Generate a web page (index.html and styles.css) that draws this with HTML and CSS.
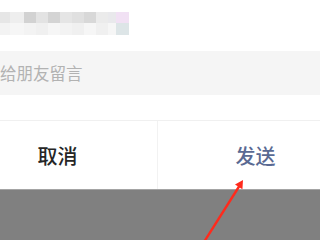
FILE: index.html
```html
<!DOCTYPE html>
<html lang="zh">
<head>
<meta charset="utf-8">
<link rel="stylesheet" href="styles.css">
</head>
<body>
<div class="screen">
  <div class="dialog">
    <div class="mosaic">
      <i class="c1"></i><i class="c2"></i><i class="c3"></i><i class="c4"></i><i class="c5"></i><i class="c6"></i><i class="c7"></i><i class="c8"></i><i class="c9"></i><i class="c10"></i><i class="c11"></i>
      <i class="d1"></i><i class="d2"></i><i class="d1"></i><i class="d3"></i><i class="d2"></i><i class="d1"></i><i class="d3"></i><i class="d2"></i><i class="d3"></i><i class="d2"></i><i class="d4"></i>
    </div>
    <div class="input">给朋友留言</div>
    <div class="actions">
      <div class="btn cancel">取消</div>
      <div class="sep"></div>
      <div class="btn send">发送</div>
    </div>
  </div>
  <div class="overlay"></div>
  <svg class="arrow" width="320" height="240" viewBox="0 0 320 240">
    <line x1="204" y1="242" x2="240" y2="185" stroke="#ff2a1c" stroke-width="2.4" stroke-linecap="round"/>
    <polygon points="243,180 242.4,189.2 235,184.6" fill="#ff2a1c"/>
  </svg>
</div>
</body>
</html>
```
FILE: styles.css
```css
html, body {
  margin: 0;
  padding: 0;
  background: #ffffff;
}
.screen {
  position: relative;
  width: 320px;
  height: 240px;
  overflow: hidden;
  font-family: "Noto Sans CJK SC", "Noto Sans", sans-serif;
}
.dialog {
  margin-left: -42px;
  width: 399px;
  height: 189px;
  background: #ffffff;
  display: flex;
  flex-direction: column;
}
.mosaic {
  margin-top: 12px;
  margin-left: 42px;
  display: grid;
  grid-template-columns: 10px 14px 12px 12px 12px 12px 12px 12px 12px 8px 13px;
  grid-template-rows: 11px 12px;
  width: 129px;
}
.mosaic i { display: block; }
.c1 { background: #e6e6e6; }
.c2 { background: #eeeeee; }
.c3 { background: #d2d2d2; }
.c4 { background: #e3e3e3; }
.c5 { background: #d4d4d4; }
.c6 { background: #e5e5e5; }
.c7 { background: #e0e0e0; }
.c8 { background: #d8d8d8; }
.c9 { background: #ebebeb; }
.c10 { background: #e9e9ec; }
.c11 { background: #f1e1f4; }
.d1 { background: #f3f3f3; }
.d2 { background: #f6f6f6; }
.d3 { background: #f0f0f0; }
.d4 { background: #dde5e7; }
.input {
  margin-top: 16px;
  height: 44px;
  background: #f5f5f5;
  box-sizing: border-box;
  padding-left: 42px;
  font-size: 16.5px;
  line-height: 44px;
  color: #b2b2b2;
}
.actions {
  margin-top: 25px;
  border-top: 1px solid #f0f0f0;
  flex: 1;
  display: grid;
  grid-template-columns: 199px 1px 1fr;
}
.sep { background: #f2f2f2; }
.btn {
  display: flex;
  align-items: center;
  justify-content: center;
  font-size: 20px;
  font-weight: 500;
}
.cancel { color: #262626; }
.send { color: #5a6a93; padding-right: 4px; }
.overlay {
  height: 51px;
  box-sizing: border-box;
  border-top: 1px solid #a4a4a4;
  background: #808080;
}
.arrow {
  position: absolute;
  left: 0;
  top: 0;
}
```
